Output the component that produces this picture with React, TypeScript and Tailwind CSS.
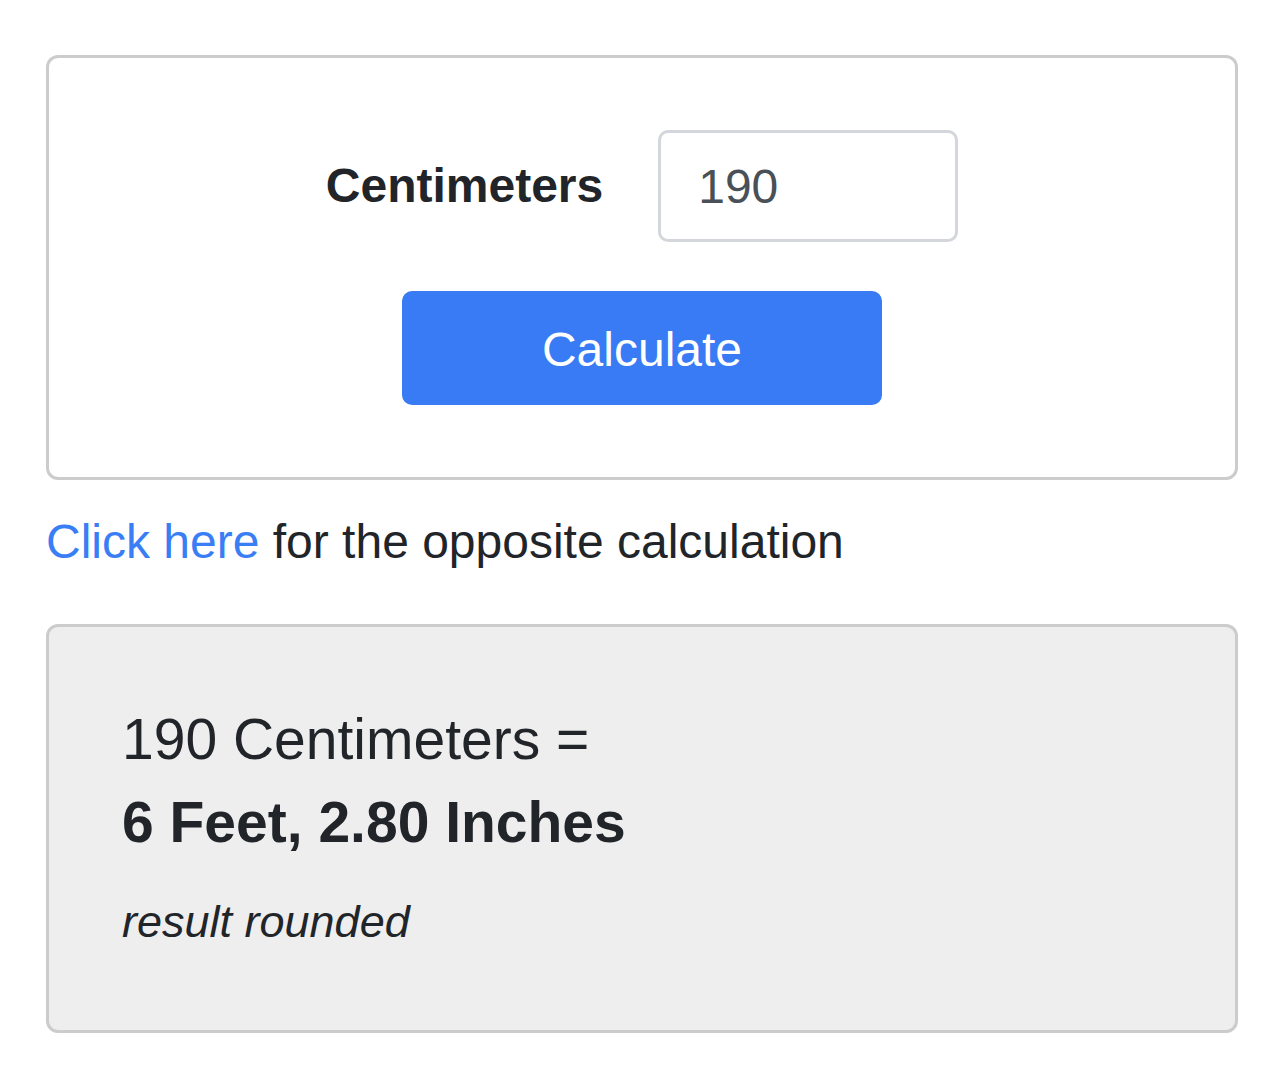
export default function App() {
  return (
    <div className="min-h-screen bg-white px-[46px] pt-[55px] font-['Liberation_Sans',Arial,sans-serif] text-[#212529]">
      <div className="rounded-[12px] border-[3px] border-[#cccccc] py-[72px]">
        <div className="flex items-center justify-center gap-[55px]">
          <label htmlFor="cm" className="text-[48px] font-bold leading-[72px]">
            Centimeters
          </label>
          <input
            id="cm"
            defaultValue="190"
            className="h-[112px] w-[300px] rounded-[10px] border-[3px] border-[#d3d6db] bg-white px-[37px] text-[48px] text-[#495057] outline-none"
          />
        </div>
        <div className="mt-[49px] flex justify-center">
          <button className="h-[114px] w-[480px] rounded-[10px] bg-[#387bf5] pt-[3px] text-[48px] text-white">
            Calculate
          </button>
        </div>
      </div>

      <p className="mt-[26px] text-[48px] leading-[72px]">
        <a href="#" className="text-[#3a7ef5]">Click here</a> for the opposite calculation
      </p>

      <div className="mt-[46px] rounded-[12px] border-[3px] border-[#cccccc] bg-[#eeeeee] px-[73px] pb-[75px] pt-[71px]">
        <div className="text-[57px] leading-[83px]">190 Centimeters =</div>
        <div className="text-[57px] font-bold leading-[83px]">6 Feet, 2.80 Inches</div>
        <div className="mt-[24px] text-[45px] italic leading-[67px]">result rounded</div>
      </div>
    </div>
  );
}
